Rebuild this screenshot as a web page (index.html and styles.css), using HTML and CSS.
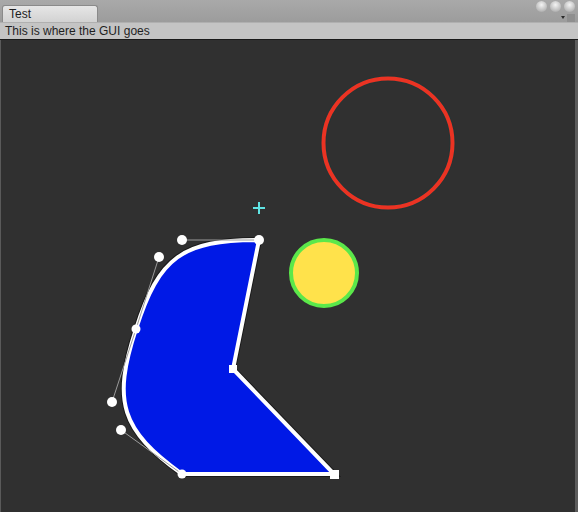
FILE: index.html
```html
<!DOCTYPE html>
<html>
<head>
<meta charset="utf-8">
<link rel="stylesheet" href="styles.css">
</head>
<body>
<div class="window">
  <div class="titlebar">
    <div class="tab">Test</div>
    <div class="controls">
      <div class="btns"><span class="btn"></span><span class="btn"></span><span class="btn"></span></div>
      <div class="menu"><span class="arrow"></span><span class="sq"></span></div>
    </div>
  </div>
  <div class="label">This is where the GUI goes</div>
  <div class="canvas">
    <svg class="scene" width="578" height="472" viewBox="0 40 578 472">
      <circle cx="388" cy="143" r="64.5" fill="none" stroke="#1a3a3a" stroke-width="6" opacity="0.5"/>
      <circle cx="388" cy="143" r="64.5" fill="none" stroke="#ea3323" stroke-width="4"/>
      <circle cx="324" cy="273" r="33" fill="#ffe24b" stroke="#5be84a" stroke-width="4"/>
      <path d="M259 202 V214 M253 208 H265" stroke="#5fe3e3" stroke-width="2"/>
      <path d="M259 240 C182 240 159 257 136 329 C112 402 121 430 182 474 L334 474 L233 369 Z" fill="#0019e6" stroke="#1a1a1a" stroke-width="6" stroke-linejoin="miter"/>
      <path d="M259 240 C182 240 159 257 136 329 C112 402 121 430 182 474 L334 474 L233 369 Z" fill="#0019e6" stroke="#ffffff" stroke-width="4"/>
      <g stroke="#9a9a9a" stroke-width="1">
        <line x1="259" y1="240" x2="182" y2="240"/>
        <line x1="159" y1="257" x2="136" y2="329"/>
        <line x1="136" y1="329" x2="112" y2="402"/>
        <line x1="121" y1="430" x2="182" y2="474"/>
      </g>
      <g fill="#ffffff">
        <circle cx="259" cy="240" r="5"/>
        <circle cx="182" cy="240" r="5"/>
        <circle cx="159" cy="257" r="5"/>
        <circle cx="136" cy="329" r="4.5"/>
        <circle cx="112" cy="402" r="5"/>
        <circle cx="121" cy="430" r="5"/>
        <circle cx="182" cy="474" r="4.5"/>
        <rect x="229" y="365" width="8" height="8"/>
        <rect x="330" y="470" width="9" height="9"/>
      </g>
    </svg>
  </div>
</div>
</body>
</html>
```
FILE: styles.css
```css
html, body {
  margin: 0;
  padding: 0;
  background: #303030;
}
.window {
  width: 578px;
  height: 512px;
  display: flex;
  flex-direction: column;
  font-family: "Liberation Sans", "DejaVu Sans", sans-serif;
  overflow: hidden;
}
.titlebar {
  height: 22px;
  background: linear-gradient(#a9a9a9, #9c9c9c);
  display: flex;
  align-items: flex-end;
  justify-content: space-between;
  position: relative;
}
.tab {
  margin-left: 2px;
  width: 88px;
  height: 16px;
  padding-left: 6px;
  background: linear-gradient(#e6e6e6, #d2d2d2);
  border: 1px solid #8a8a8a;
  border-bottom: none;
  border-radius: 3px 3px 0 0;
  font-size: 12px;
  line-height: 16px;
  color: #1e1e1e;
}
.controls {
  display: flex;
  flex-direction: column;
  align-items: flex-end;
  padding-right: 3px;
  height: 22px;
}
.btns {
  display: flex;
  gap: 3px;
  padding-top: 1px;
}
.btn {
  width: 11px;
  height: 11px;
  border-radius: 50%;
  background: radial-gradient(circle at 50% 35%, #f4f4f4, #b8b8b8 70%, #8e8e8e);
}
.menu {
  display: flex;
  align-items: center;
  gap: 2px;
  height: 9px;
  margin-top: 1px;
}
.arrow {
  width: 0;
  height: 0;
  border-left: 2.5px solid transparent;
  border-right: 2.5px solid transparent;
  border-top: 3px solid #2a2a2a;
}
.sq {
  width: 8px;
  height: 8px;
  background: #8f8f8f;
}
.label {
  height: 16px;
  background: #c4c4c4;
  border-top: 1px solid #b0b0b0;
  border-bottom: 1px solid #1a1a1a;
  padding-left: 5px;
  font-size: 12px;
  line-height: 16px;
  color: #1f1f1f;
}
.canvas {
  flex: 1;
  background: #303030;
  border-left: 1px solid #5a5a5a;
  border-right: 3px solid #5c5c5c;
  overflow: hidden;
}
.scene {
  display: block;
  margin-left: -1px;
}
```
